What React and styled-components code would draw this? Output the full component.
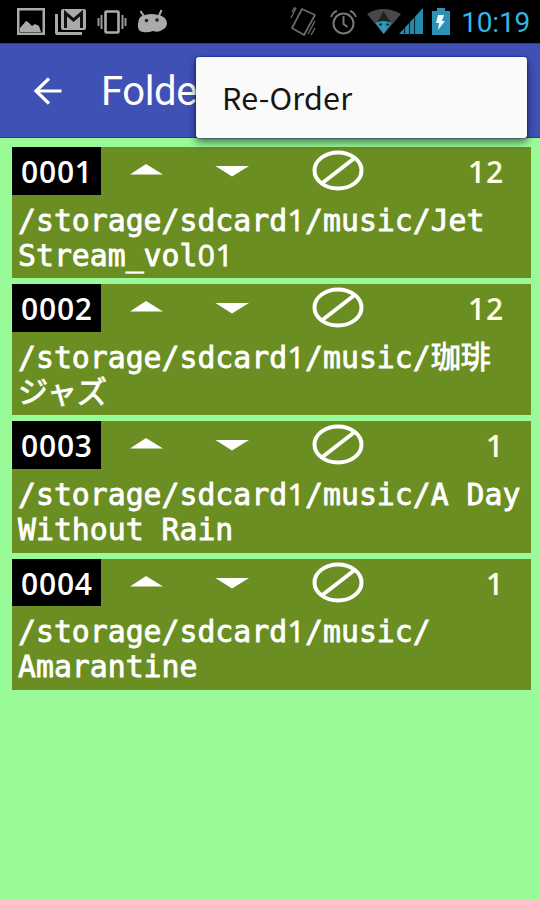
import React from "react";
import styled, { createGlobalStyle } from "styled-components";

const GlobalStyle = createGlobalStyle`
  * {
    box-sizing: border-box;
  }

  body {
    margin: 0;
    background: #98fb98;
    font-family: "Roboto", "Noto Sans CJK JP", sans-serif;
  }
`;

const Screen = styled.div`
  width: 540px;
  height: 900px;
  background: #98fb98;
  overflow: hidden;
`;

const StatusBar = styled.div`
  display: flex;
  justify-content: space-between;
  height: 43px;
  background: #000;

  svg {
    display: block;
  }
`;

const Clock = styled.span`
  font-size: 28px;
  line-height: 46px;
  letter-spacing: -0.2px;
  color: #33b5e5;
`;

const StatusRight = styled.div`
  display: flex;
  gap: 10px;
  padding-right: 10px;
`;

const AppBar = styled.header`
  position: relative;
  display: flex;
  align-items: center;
  height: 95px;
  padding: 1px 0 0 33px;
  background: #3f51b5;
  border-top: 1px solid #303d85;
  border-bottom: 1px solid #2435a5;
`;

const BackButton = styled.button`
  display: flex;
  width: 29px;
  height: 28px;
  padding: 0;
  border: none;
  background: none;
  cursor: pointer;
`;

const Title = styled.h1`
  margin: 2px 0 0 39px;
  font-size: 40px;
  font-weight: 400;
  letter-spacing: -0.4px;
  line-height: 48px;
  color: #fff;
`;

const PopupMenu = styled.div`
  position: absolute;
  top: 13px;
  right: 13px;
  width: 331px;
  height: 81px;
  padding-left: 26px;
  background: #fafafa;
  border-radius: 3px;
  box-shadow: 0 0 2px #00008b, 0 4px 8px rgba(0, 0, 0, 0.55);
`;

const MenuItem = styled.div`
  font-family: "Noto Sans CJK JP", sans-serif;
  font-size: 30.5px;
  letter-spacing: 0.2px;
  line-height: 80px;
  color: #151515;
`;

const FolderList = styled.ul`
  display: flex;
  flex-direction: column;
  gap: 6px;
  margin: 0;
  padding: 9px 9px 0 12px;
  list-style: none;
`;

const FolderCard = styled.li`
  height: 131.2px;
  background: #6b8e23;
`;

const CardHead = styled.div`
  display: flex;
  height: 47.5px;
  font-family: "Open Sans", sans-serif;
  font-size: 30px;
  font-weight: 600;
  line-height: 50px;
  color: #fff;
`;

const Num = styled.div`
  width: 89px;
  padding-left: 9px;
  background: #000;
  letter-spacing: 0.8px;
`;

const HeadIcons = styled.svg`
  flex: none;
  width: 264px;
  height: 47px;
`;

const Count = styled.div`
  flex: 1;
  padding-right: 27px;
  text-align: right;
  letter-spacing: 0.8px;
  color: #ffffe0;
`;

const Path = styled.div`
  padding: 8px 0 0 6px;
  font-family: "DejaVu Sans Mono", "Noto Sans CJK JP", monospace;
  font-size: 29.8px;
  line-height: 35px;
  white-space: pre;
  color: #fff;
  -webkit-text-stroke: 0.8px #fff;
`;

const Digit = styled.span`
  display: inline-block;
  width: 18px;
  font-family: "Open Sans", sans-serif;
  font-size: 30px;
  line-height: 30px;
  text-align: center;
`;

const Kana = styled.span`
  font-family: "Noto Sans CJK JP", sans-serif;
  font-size: 30.2px;
  font-weight: 400;
  line-height: 30px;
`;

const folders = [
  { id: "0001", count: 12, lines: ["/storage/sdcard1/music/Jet", "Stream_vol01"] },
  { id: "0002", count: 12, lines: ["/storage/sdcard1/music/珈琲", "ジャズ"] },
  { id: "0003", count: 1, lines: ["/storage/sdcard1/music/A Day", "Without Rain"] },
  { id: "0004", count: 1, lines: ["/storage/sdcard1/music/", "Amarantine"] },
];

// digits and Japanese runs use their own face
const renderLine = (line) =>
  line.split(/(\d|[^\x00-\x7f]+)/).map((part, i) => {
    if (/^\d$/.test(part)) return <Digit key={i}>{part}</Digit>;
    if (/[^\x00-\x7f]/.test(part)) return <Kana key={i}>{part}</Kana>;
    return part;
  });

function NotificationIcons() {
  return (
    <svg width="180" height="43" viewBox="0 0 180 43" fill="#aaa">
      <path d="M17 8h28v27H17zM19.5 10.5v22h23v-22z" fillRule="evenodd" />
      <path d="M20 32v-4l3.500-4 2.500-3 2 1 4 4 3-2 4 2 2 6z" />
      <path d="M55 14h3v18h24v3H57q-2 0-2-2z" />
      <rect x="61" y="9" width="25" height="21" rx="2" />
      <path d="M65.5 28V13l8 7 8-7v15" fill="none" stroke="#111" strokeWidth="3" />
      <rect x="105.500" y="11.500" width="13" height="21" rx="1" fill="none" stroke="#aaa" strokeWidth="2.600" />
      <path d="M101.500 15v14M122.500 15v14M98.500 18v8M125.500 18v8" stroke="#999" strokeWidth="2" />
      <path d="M140.500 11l4 6M161.500 10l-3 7" stroke="#aaa" strokeWidth="2" />
      <path d="M138 24q0-8 7-9 7-2 13 0 8 1 9 8 0 5-5 7-4 3-9 1-5 2-10 1-6-1-5-8z" />
      <circle cx="146.500" cy="20.500" r="1.800" fill="#222" />
      <circle cx="157" cy="20" r="1.800" fill="#222" />
    </svg>
  );
}

function SystemIcons() {
  return (
    <svg width="163" height="43" viewBox="287 0 163 43" fill="none">
      <g stroke="#686868" strokeWidth="1.800">
        <path d="M301 9l13 6-11 20-12-7z" strokeLinejoin="round" />
        <path d="M290 18l5-10M291 12l3-5M307 34l7-13M310 35l4-7" strokeWidth="1.400" />
      </g>
      <g stroke="#777" strokeWidth="2">
        <circle cx="342.500" cy="23.500" r="10" />
        <path d="M342.500 16v8l4 3M330 17q2-5 6-6M355 17q-2-5-6-6" />
      </g>
      <path d="M366 14q16-10 34 0l-17 20z" fill="#484848" />
      <path d="M382.500 11l-6 11h13z" fill="#222" />
      <path d="M374.500 23q8-4 16 0l-8 11z" fill="#3296ba" />
      <path d="M378 24.500h3M385 24.500h3" stroke="#083442" strokeWidth="2" />
      <path d="M398 34L422 8v26z" fill="#268cae" />
      <path d="M403.500 28v7M408.500 22v13M413.500 17v18" stroke="#092630" strokeWidth="1.200" />
      <path d="M431 11h5V8h8v3h5v24h-18z" fill="#2c91b5" />
      <path d="M437 15h6l-2 6h3l-7 9 1-7h-3z" fill="#eafaff" />
    </svg>
  );
}

function FolderItem({ folder }) {
  return (
    <FolderCard>
      <CardHead>
        <Num>{folder.id}</Num>
        <HeadIcons viewBox="0 0 264 47">
          <path d="M29 27.500l16-10.500 17 10.500z" fill="#fff" />
          <path d="M114.500 19h33.500l-17 10.500z" fill="#fff" />
          <ellipse cx="237" cy="23.500" rx="23.500" ry="18" fill="none" stroke="#fff" strokeWidth="4" />
          <path d="M222 35.500l31-24" stroke="#fff" strokeWidth="4" />
        </HeadIcons>
        <Count>{folder.count}</Count>
      </CardHead>
      <Path>
        {folder.lines.map((line) => (
          <div key={line}>{renderLine(line)}</div>
        ))}
      </Path>
    </FolderCard>
  );
}

function App() {
  return (
    <Screen>
      <GlobalStyle />
      <StatusBar>
        <NotificationIcons />
        <StatusRight>
          <SystemIcons />
          <Clock>10:19</Clock>
        </StatusRight>
      </StatusBar>
      <AppBar>
        <BackButton aria-label="Back">
          <svg width="29" height="28" viewBox="0 0 29 28" fill="none" stroke="#fff" strokeWidth="3.200">
            <path d="M28.500 14H3M16 1.500L3 14l13 12.500" />
          </svg>
        </BackButton>
        <Title>Folder</Title>
        <PopupMenu>
          <MenuItem>Re-Order</MenuItem>
        </PopupMenu>
      </AppBar>
      <FolderList>
        {folders.map((folder) => (
          <FolderItem key={folder.id} folder={folder} />
        ))}
      </FolderList>
    </Screen>
  );
}

export default App;
